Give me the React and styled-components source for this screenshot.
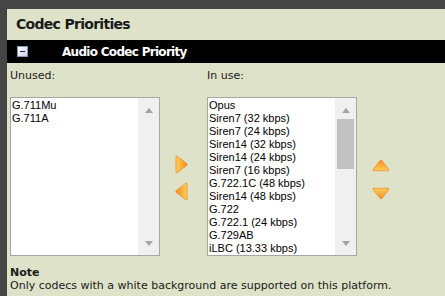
import React from 'react';
import styled, { createGlobalStyle } from 'styled-components';

const GlobalStyle = createGlobalStyle`
html, body {
  margin: 0;
  background: #454545;
  width: 445px;
  height: 296px;
  overflow: hidden;
}
body {
  padding: 9px 0 0 7px;
  box-sizing: border-box;
}
`;

const Panel = styled.div`
background-color: #dee2c8;
height: 287px;
font-family: 'DejaVu Sans', Verdana, sans-serif;
color: #1a1a1a;
`;

const Title = styled.h1`
margin: 0;
height: 31px;
padding: 7px 0 0 9px;
box-sizing: border-box;
font-size: 14px;
font-weight: bold;
letter-spacing: -0.7px;
`;

const Bar = styled.div`
display: flex;
align-items: center;
height: 23px;
background: #000;
padding-left: 10px;
`;

const BarTitle = styled.span`
color: #fff;
font-size: 12px;
font-weight: bold;
letter-spacing: -0.7px;
margin-left: 34px;
`;

const Collapse = styled.span`
width: 11px;
height: 11px;
box-sizing: border-box;
border: 1px solid #8a98b4;
background: linear-gradient(135deg, #ffffff 0%, #c9d2ea 100%);
display: flex;
align-items: center;
justify-content: center;
&::after {
  content: '';
  width: 5px;
  height: 1px;
  background: #1e2a44;
}
`;

const Grid = styled.div`
display: grid;
grid-template-columns: 150px 47px 150px 1fr;
grid-template-rows: 34px 159px;
padding-left: 3px;
`;

const Label = styled.div`
font-size: 11px;
padding-top: 6px;
`;

const ListBox = styled.div`
display: flex;
background: #fff;
border: 1px solid #a6a6a6;
box-sizing: border-box;
height: 159px;
`;

const Items = styled.ul`
flex: 1;
min-width: 0;
list-style: none;
margin: 0;
padding: 1px 0 0 1px;
overflow: hidden;
font-family: 'Liberation Sans', Arial, sans-serif;
font-size: 11px;
line-height: 13px;
color: #000;
white-space: nowrap;
`;

const Track = styled.div`
width: 21px;
background: #f0f0f0;
display: flex;
flex-direction: column;
align-items: center;
padding: 10px 0 9px;
box-sizing: border-box;
`;

const ScrollArrow = styled.span`
width: 0;
height: 0;
border-left: 4.5px solid transparent;
border-right: 4.5px solid transparent;
${({ down }) => down
  ? 'border-top: 5px solid #a3a3a3; margin-top: auto;'
  : 'border-bottom: 5px solid #a3a3a3;'}
`;

const Thumb = styled.span`
width: 17px;
height: 50px;
margin-top: 6px;
background: #c1c1c1;
`;

const ArrowColumn = styled.div`
display: flex;
flex-direction: column;
align-items: ${({ wide }) => wide ? 'flex-start' : 'center'};
justify-content: center;
gap: ${({ wide }) => wide ? '15px' : '8px'};
padding: ${({ wide }) => wide ? '5px 0 0 15px' : '2px 4px 0 0'};
`;

const Note = styled.div`
padding: 10px 0 0 3px;
font-size: 11px;
line-height: 13px;
b {
  display: block;
}
`;

const Arrow = ({ dir }) => {
  const rot = { right: 0, left: 180, up: 270, down: 90 }[dir];
  const vertical = dir === 'up' || dir === 'down';
  const w = vertical ? 18 : 13;
  const h = vertical ? 13 : 19;
  return (
    <svg width={w} height={h} viewBox={vertical ? '-3 3 19 13' : '0 0 13 19'}>
      <defs>
        <linearGradient id={`g-${dir}`} x1="0" y1="0" x2="1" y2="0">
          <stop offset="0" stopColor="#ffd15a" />
          <stop offset="1" stopColor="#f78a1e" />
        </linearGradient>
      </defs>
      <g transform={`rotate(${rot} 6.5 9.5)`}>
        <path
          d="M2.2 1.2 Q1 0.5 1 2 L1 17 Q1 18.5 2.2 17.8 L11.8 10.3 Q12.6 9.5 11.8 8.7 Z"
          fill={`url(#g-${dir})`}
          stroke="#ef8a2c"
          strokeWidth="0.8"
          strokeLinejoin="round"
        />
      </g>
    </svg>
  );
};

const unused = ['G.711Mu', 'G.711A'];
const inUse = [
  'Opus',
  'Siren7 (32 kbps)',
  'Siren7 (24 kbps)',
  'Siren14 (32 kbps)',
  'Siren14 (24 kbps)',
  'Siren7 (16 kbps)',
  'G.722.1C (48 kbps)',
  'Siren14 (48 kbps)',
  'G.722',
  'G.722.1 (24 kbps)',
  'G.729AB',
  'iLBC (13.33 kbps)',
];

const CodecList = ({ items, scrollable }) => (
  <ListBox>
    <Items>
      {items.map((c) => <li key={c}>{c}</li>)}
    </Items>
    <Track>
      <ScrollArrow />
      {scrollable && <Thumb />}
      <ScrollArrow down />
    </Track>
  </ListBox>
);

export default function App() {
  return (
    <>
      <GlobalStyle />
      <Panel>
        <Title>Codec Priorities</Title>
        <Bar>
          <Collapse />
          <BarTitle>Audio Codec Priority</BarTitle>
        </Bar>
        <Grid>
          <Label>Unused:</Label>
          <div />
          <Label>In use:</Label>
          <div />
          <CodecList items={unused} />
          <ArrowColumn>
            <Arrow dir="right" />
            <Arrow dir="left" />
          </ArrowColumn>
          <CodecList items={inUse} scrollable />
          <ArrowColumn wide>
            <Arrow dir="up" />
            <Arrow dir="down" />
          </ArrowColumn>
        </Grid>
        <Note>
          <b>Note</b>
          Only codecs with a white background are supported on this platform.
        </Note>
      </Panel>
    </>
  );
}
